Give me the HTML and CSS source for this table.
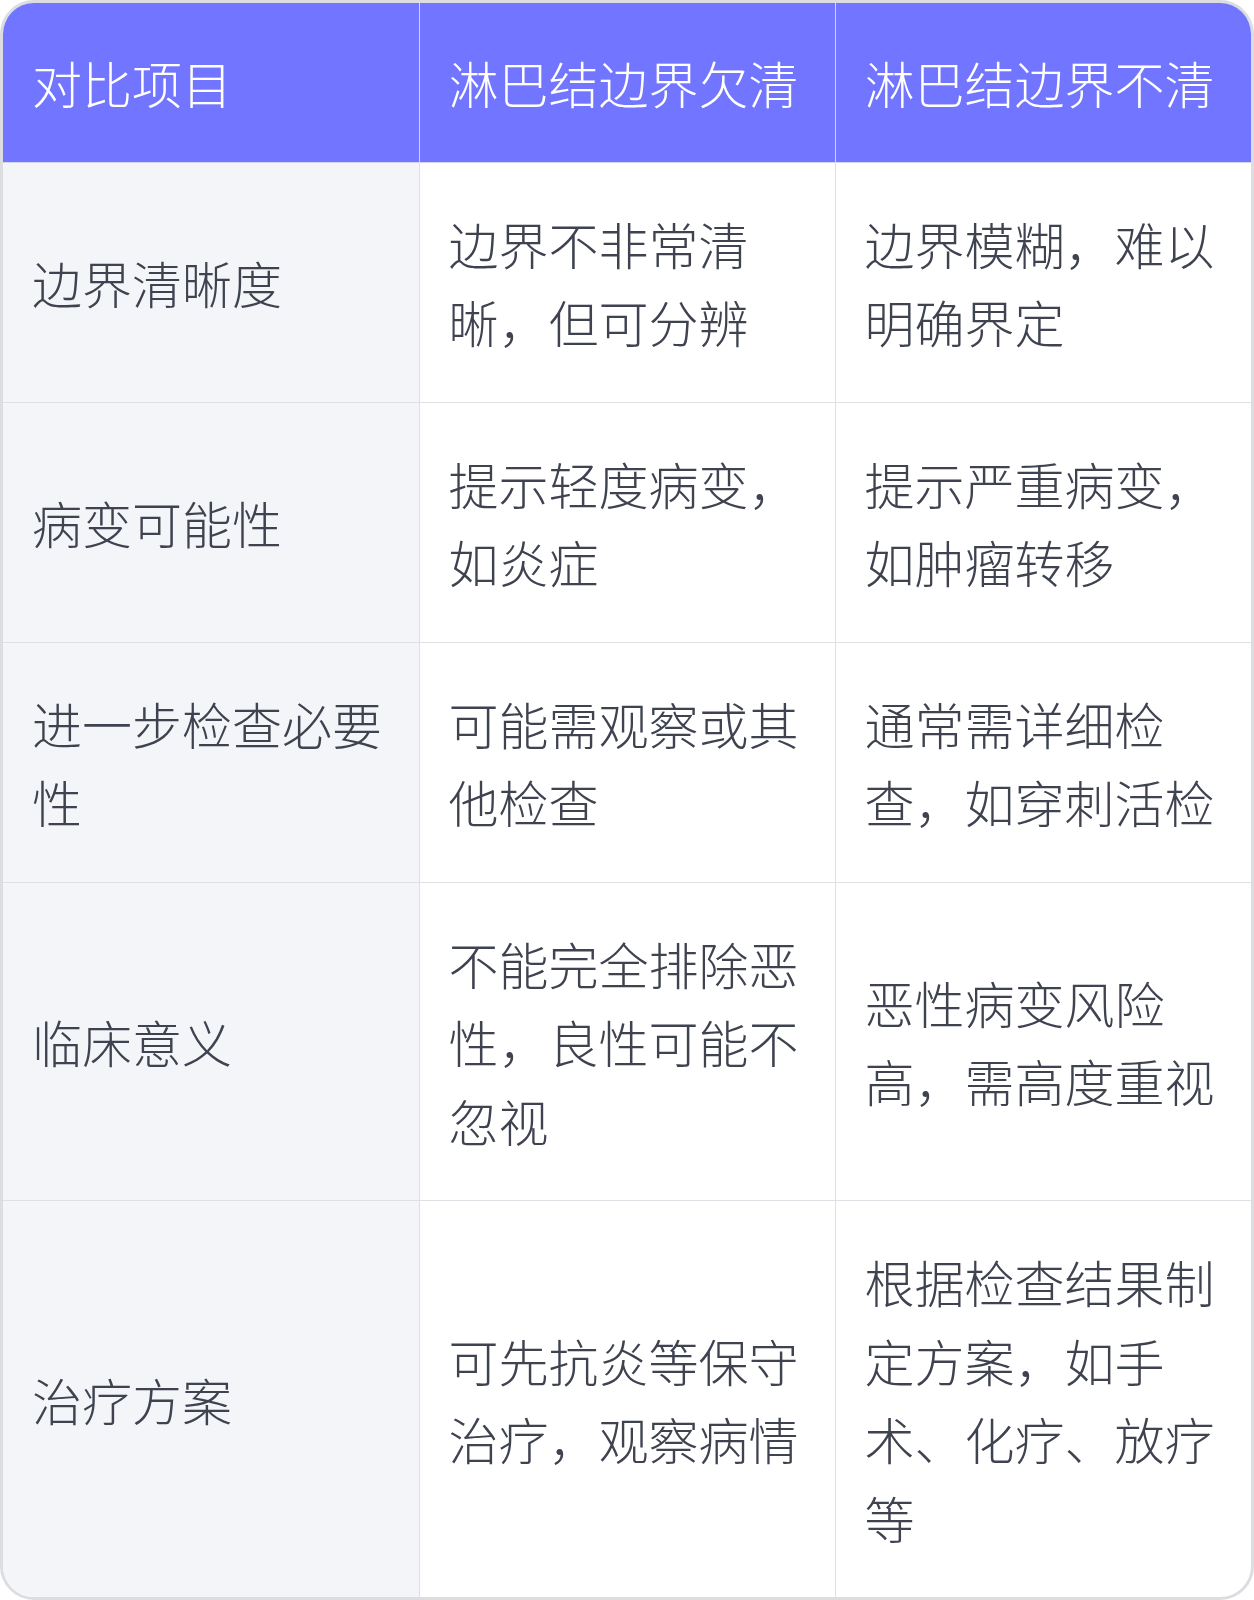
FILE: index.html
```html
<!DOCTYPE html>
<html lang="zh-CN">
<head>
<meta charset="utf-8">
<link rel="stylesheet" href="styles.css">
</head>
<body>
<div class="card">
  <table class="cmp">
    <colgroup><col class="c"><col class="c"><col class="c"></colgroup>
    <thead>
      <tr><th>对比项目</th><th>淋巴结边界欠清</th><th>淋巴结边界不清</th></tr>
    </thead>
    <tbody>
      <tr><td class="key">边界清晰度</td><td>边界不非常清晰，但可分辨</td><td>边界模糊，难以明确界定</td></tr>
      <tr><td class="key">病变可能性</td><td>提示轻度病变，如炎症</td><td>提示严重病变，如肿瘤转移</td></tr>
      <tr><td class="key">进一步检查必要性</td><td>可能需观察或其他检查</td><td>通常需详细检查，如穿刺活检</td></tr>
      <tr><td class="key">临床意义</td><td>不能完全排除恶性，良性可能不忽视</td><td>恶性病变风险高，需高度重视</td></tr>
      <tr><td class="key">治疗方案</td><td>可先抗炎等保守治疗，观察病情</td><td>根据检查结果制定方案，如手术、化疗、放疗等</td></tr>
    </tbody>
  </table>
</div>
</body>
</html>
```

FILE: styles.css
```css
html, body {
  margin: 0;
  padding: 0;
  background: #ffffff;
}

.card {
  width: 1254px;
  box-sizing: border-box;
  border: 3px solid #dcdde1;
  border-radius: 34px;
  overflow: hidden;
  background: #ffffff;
}

.cmp {
  width: 100%;
  border-collapse: collapse;
  table-layout: fixed;
  font-family: "Noto Sans CJK SC", "Noto Sans", sans-serif;
  font-size: 50px;
  line-height: 78.5px;
  font-weight: 300;
}

.cmp th,
.cmp td {
  padding: 41px 30px 41px 29px;
  text-align: left;
  vertical-align: middle;
  border: 1px solid #dfe0e5;
}

.cmp th {
  padding-top: 40px;
  padding-bottom: 40px;
  background: #7175ff;
  color: #ffffff;
  font-weight: 300;
  border-color: #d6d7e6;
  border-top: none;
}

.cmp td {
  color: #3f4350;
}

.cmp td.key {
  background: #f4f5f9;
}

.cmp tr > :first-child { border-left: none; }
.cmp tr > :last-child { border-right: none; }
.cmp tbody tr:last-child td { border-bottom: none; }
```
